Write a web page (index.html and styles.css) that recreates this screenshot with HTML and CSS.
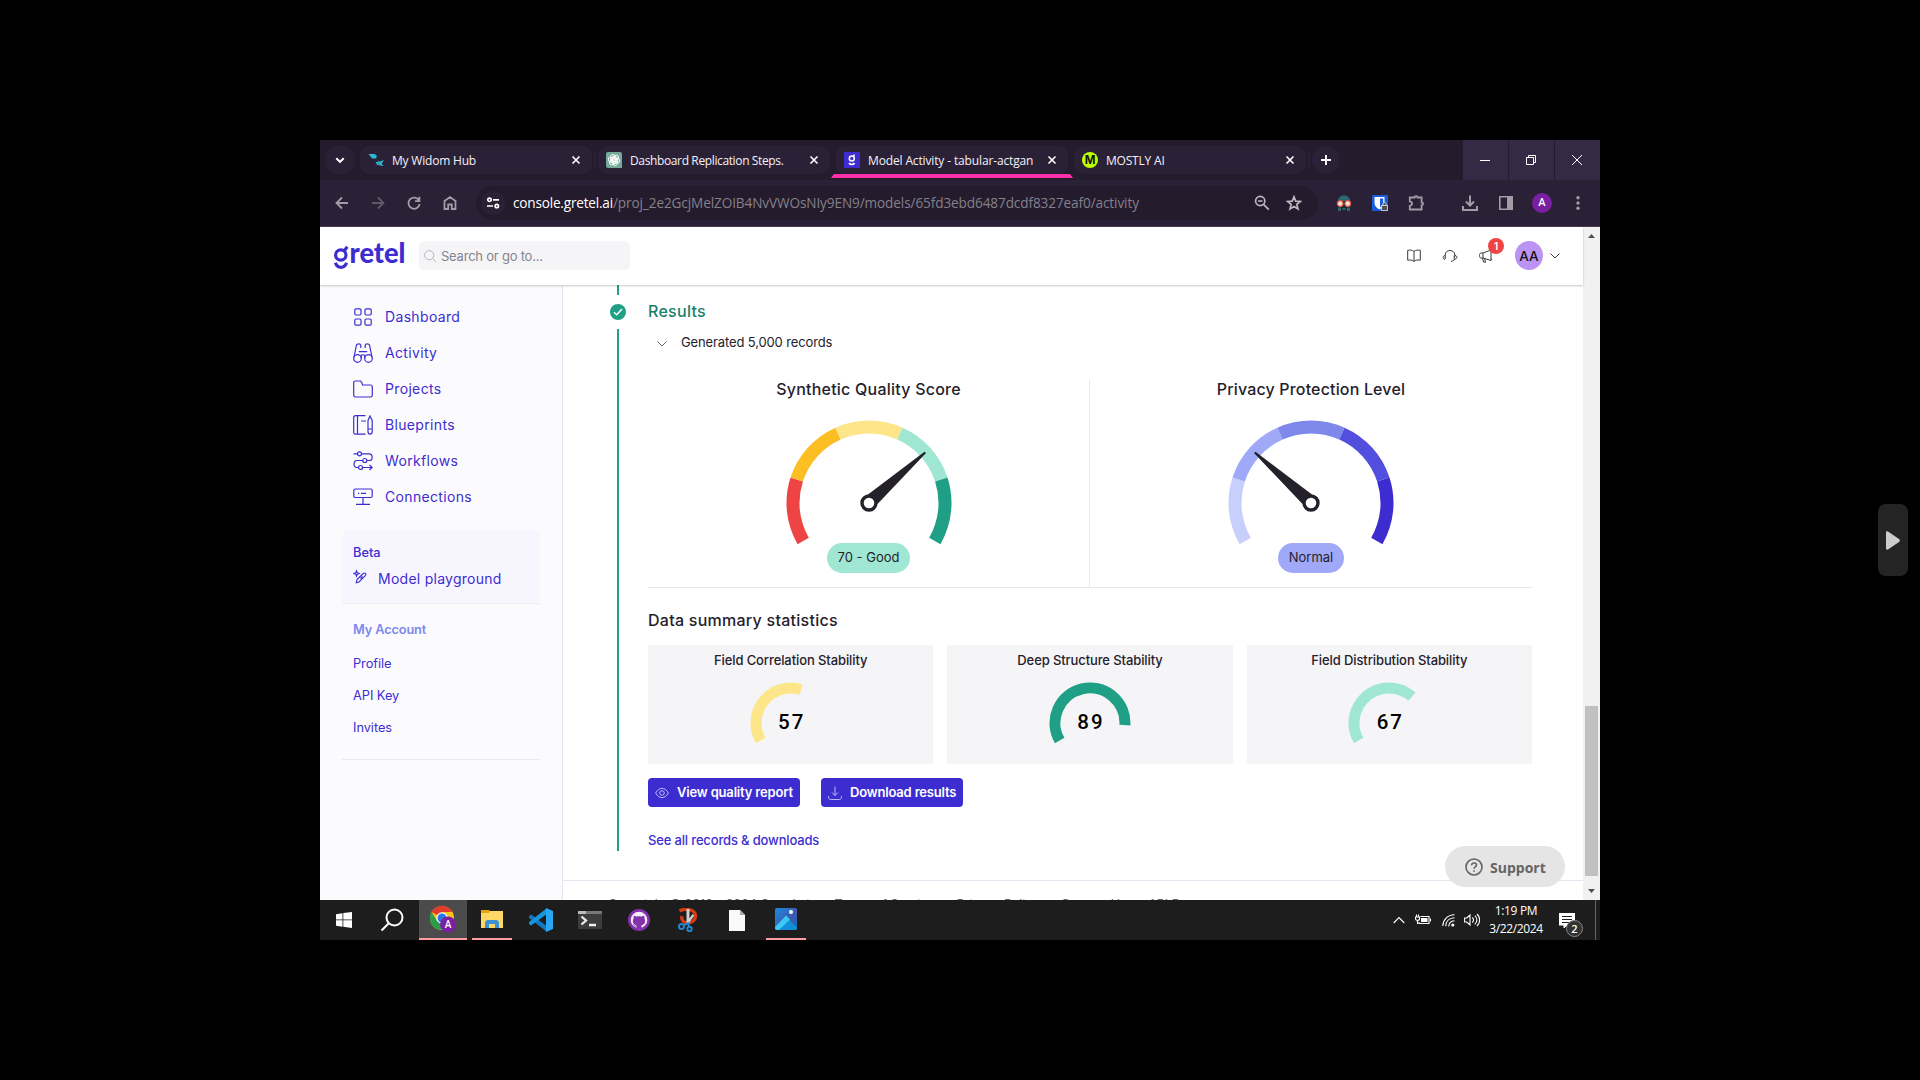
FILE: index.html
```html
<!DOCTYPE html>
<html lang="en">
<head>
<meta charset="utf-8">
<title>Model Activity - tabular-actgan</title>
<link rel="stylesheet" href="styles.css">
</head>
<body>
<div class="window">
  <div class="tabstrip">
    <div class="tab-search"><svg width="28" height="28" viewBox="0 0 28 28" fill="none" stroke="#fff" stroke-width="2"><path d="M10.3 12.2l3.7 3.7 3.7-3.7"/></svg></div>
    <div class="tab">
      <svg class="favicon" viewBox="0 0 16 16"><path fill="#2bbbd0" d="M.5 2h6.500L4.200 6.500zM4 6.500L6.800 2.500 8.500 6.500zM7 2l2 2-1 2zM7.500 10h4l-2 3.500zM9.500 8.500L12 9.500 16 8l-3 4.500zM10 13l2.500-3 3 4z"/></svg>
      <span class="tab-title t1">My Widom Hub</span><svg class="close" viewBox="0 0 10 10"><path d="M1.500 1.500l7 7M8.500 1.500l-7 7"/></svg>
    </div>
    <i class="tab-sep"></i>
    <div class="tab">
      <svg class="favicon" viewBox="0 0 16 16"><path d="M2 0h12a2 2 0 0 1 2 2v14H2a2 2 0 0 1-2-2V2a2 2 0 0 1 2-2z" fill="#74aa9c"/><g fill="none" stroke="#fff" stroke-width=".9"><rect x="4.600" y="2.500" width="4.600" height="8" rx="2.300"/><rect x="4.600" y="2.500" width="4.600" height="8" rx="2.300" transform="rotate(60 8 8)"/><rect x="4.600" y="2.500" width="4.600" height="8" rx="2.300" transform="rotate(120 8 8)"/><rect x="4.600" y="2.500" width="4.600" height="8" rx="2.300" transform="rotate(180 8 8)"/><rect x="4.600" y="2.500" width="4.600" height="8" rx="2.300" transform="rotate(240 8 8)"/><rect x="4.600" y="2.500" width="4.600" height="8" rx="2.300" transform="rotate(300 8 8)"/></g></svg>
      <span class="tab-title t2">Dashboard Replication Steps.</span><svg class="close" viewBox="0 0 10 10"><path d="M1.500 1.500l7 7M8.500 1.500l-7 7"/></svg>
    </div>
    <div class="tab active">
      <svg class="favicon" viewBox="0 0 16 16"><path fill="#3d2dd1" d="M0 0h16v16H0z"/><g fill="none" stroke="#fff" stroke-width="1.500"><circle cx="7.800" cy="6.600" r="2.500"/><path d="M9.500 4.200l1-1.500M5 11c1.200 2 4.400 2 5.600 0"/></g></svg>
      <span class="tab-title t3">Model Activity - tabular-actgan</span><svg class="close" viewBox="0 0 10 10"><path d="M1.500 1.500l7 7M8.500 1.500l-7 7"/></svg>
    </div>
    <div class="tab">
      <svg class="favicon" viewBox="0 0 16 16"><circle cx="8" cy="8" r="8" fill="#c1ff00"/><text class="mostly" x="8" y="12" text-anchor="middle">M</text></svg>
      <span class="tab-title t4">MOSTLY AI</span><svg class="close" viewBox="0 0 10 10"><path d="M1.500 1.500l7 7M8.500 1.500l-7 7"/></svg>
    </div>
    <i class="tab-sep"></i>
    <div class="new-tab"><svg width="28" height="28" viewBox="0 0 28 28" stroke="#fff" stroke-width="2"><path d="M14 9v10M9 14h10"/></svg></div>
    <div class="win-buttons">
      <span><svg width="12" height="12" viewBox="0 0 12 12"><path d="M1 6.500h10"/></svg></span>
      <span><svg width="12" height="12" viewBox="0 0 12 12"><path d="M1.500 3.500h7v7h-7zM3.500 3.500v-2h7v7h-2"/></svg></span>
      <span><svg width="12" height="12" viewBox="0 0 12 12"><path d="M1 1l10 10M11 1L1 11"/></svg></span>
    </div>
  </div>

  <div class="toolbar">
    <div class="nav-buttons">
      <svg viewBox="0 0 16 16"><path d="M14 8H3M8 2.500L2.500 8 8 13.500"/></svg>
      <svg class="dim" viewBox="0 0 16 16"><path d="M2 8h11M8 2.500L13.500 8 8 13.500"/></svg>
      <svg viewBox="0 0 16 16"><path d="M13 5.500A5.600 5.600 0 1 0 13.600 9M13.400 1.800v4.400H9"/></svg>
      <svg viewBox="0 0 16 16"><path d="M2.500 14V6L8 2l5.500 4v8H9.800V9.500H6.200V14z"/></svg>
    </div>
    <div class="urlbar">
      <span class="site-info"><svg width="14" height="14" viewBox="0 0 14 14" fill="none" stroke="#fff" stroke-width="1.600"><circle cx="3.500" cy="3.800" r="1.700"/><path d="M7 3.800h6M1 10h6"/><circle cx="10.800" cy="10" r="1.700"/></svg></span>
      <span class="url"><b>console.gretel.ai</b><span class="path">/proj_2e2GcjMelZOIB4NvVWOsNIy9EN9/models/65fd3ebd6487dcdf8327eaf0/activity</span></span>
      <svg class="zoomicon" width="16" height="16" viewBox="0 0 16 16"><circle cx="6.200" cy="6" r="4.600"/><path d="M9.800 9.600l5 5M4 6h4.500"/></svg>
      <svg class="star" width="16" height="16" viewBox="0 0 16 16"><path d="M8 1.800l1.700 4.300 4.700.3-3.600 3 1.200 4.600L8 11.500 4 14l1.200-4.600-3.600-3 4.700-.3z"/></svg>
    </div>
    <div class="ext">
      <svg viewBox="0 0 16 16"><path fill="#2d6872" d="M2 6C2 2.500 5 .5 8 .5s6 2 6 5.500z"/><path fill="#182933" d="M1.500 7h13v7h-13z"/><path fill="#2d6872" d="M2 12.500h3V16H2zM6.500 13h3v2h-3zM11 12.500h3V16h-3z"/><circle cx="4.200" cy="8.600" r="2.900" fill="#f3dfd6" stroke="#dc5036" stroke-width="1.200"/><circle cx="11.800" cy="8.600" r="2.900" fill="#f3dfd6" stroke="#dc5036" stroke-width="1.200"/></svg>
      <svg viewBox="0 0 16 16"><rect width="16" height="16" rx="1" fill="#175ddc"/><path fill="#fff" d="M2.500 2h10v6c0 3-2 5-5 6.500-3-1.500-5-3.500-5-6.500z"/><path fill="#175ddc" d="M8 3.500h3.200V8c0 1.600-1.200 3-3.200 4.200z"/><path fill="#4d5054" stroke="#dce8dc" stroke-width=".8" d="M9.500 10.500h6v5h-6zM11 10.500V8.500c0-1.300 3-1.300 3 0v2"/></svg>
      <svg viewBox="0 0 16 16"><path fill="none" stroke="#a19ca6" stroke-width="1.800" d="M1.800 2.500h4.800c0-1.800 3-1.800 3 0h4v4.800c2 0 2 2.800 0 2.800v4.400H1.800v-3.600c3-.6 3-4 0-4.600z"/></svg>
    </div>
    <div class="actions">
      <svg viewBox="0 0 16 16" fill="none" stroke="#a19ca6" stroke-width="2"><path d="M8 .5v9.500M4 6.500l4 4 4-4M1 11v4h14v-4"/></svg>
      <svg viewBox="0 0 16 16"><path fill="none" stroke="#a19ca6" stroke-width="1.600" d="M1.800 1.800h12.400v12.400H1.800z"/><path fill="#a19ca6" d="M9 1h6v14H9z"/></svg>
      <span class="profile">A</span>
      <svg viewBox="0 0 16 16" fill="#a19ca6"><circle cx="8" cy="2.700" r="1.700"/><circle cx="8" cy="8" r="1.700"/><circle cx="8" cy="13.300" r="1.700"/></svg>
    </div>
  </div>

  <div class="viewport">
    <div class="page">
      <header class="header">
        <svg class="logo" width="72" height="30" viewBox="0 0 72 30" role="img" aria-label="gretel"><g fill="none" stroke="#3d2dd1" stroke-width="3.200"><circle cx="6.800" cy="14" r="5.200"/><path d="M10.300 9.800l3-4M1.400 21.800c2 6 9 6 11.200 0"/></g><text class="wordmark" x="15.500" y="21.500" textLength="56" lengthAdjust="spacingAndGlyphs">retel</text></svg>
        <div class="search"><svg width="12" height="12" viewBox="0 0 12 12" fill="none" stroke="#b6b4c0"><circle cx="5.200" cy="5.200" r="4.600"/><path d="M8.500 8.500l3.200 3.200"/></svg><span>Search or go to...</span></div>
        <div class="header-tools">
          <svg width="16" height="16" viewBox="0 0 16 16"><path d="M8 3.500v10M8 3.500C6.500 2 4 1.800 1.700 2.300v9.900C4 11.700 6.500 12 8 13.500c1.500-1.500 4-1.800 6.300-1.300V2.300C12 1.800 9.500 2 8 3.500z"/></svg>
          <svg width="16" height="16" viewBox="0 0 16 16"><path d="M3.200 11V7c0-6 9.600-6 9.600 0v2M3 7.500c-2.400.5-2.400 3.500 0 4M13 7.300c2.500.5 2.300 3.200.5 3.700h-1.300V7.500M12.500 11c-.3 2-2 2-3.500 2.300"/></svg>
          <span class="megaphone"><svg width="16" height="16" viewBox="0 0 16 16"><path d="M5 5l8-3v10.500L5 10H3C1 10 1 5 3 5zM5 5v5M4.500 10l1 4 2 .3-.8-3.500M13 4l1-.5M13 11l1 .5"/></svg><b class="badge">1</b></span>
          <span class="avatar">AA</span>
          <svg class="chev" width="10" height="6" viewBox="0 0 10 6"><path d="M.5.500L5 5 9.500.5"/></svg>
        </div>
      </header>
      <div class="body">
        <aside class="sidebar">
          <nav class="menu">
            <a><svg viewBox="0 0 20 20"><rect x="1.800" y="1.800" width="6.200" height="6.200" rx="1.200"/><rect x="12" y="1.800" width="6.200" height="6.200" rx="1.200"/><rect x="1.800" y="12" width="6.200" height="6.200" rx="1.200"/><rect x="12" y="12" width="6.200" height="6.200" rx="1.200"/></svg>Dashboard</a>
            <a><svg viewBox="0 0 20 20"><circle cx="4.500" cy="15.500" r="3.800"/><circle cx="15.500" cy="15.500" r="3.800"/><path d="M.9 14.500L3.500 2c.5-1.500 4-1.500 4.300 0v3M19.100 14.500L16.500 2c-.5-1.500-4-1.500-4.300 0v3M5.800 8.700h8.400M8.200 15.500V12h3.600v3.500"/></svg>Activity</a>
            <a><svg viewBox="0 0 20 20"><path d="M.7 16V3.800C.7 2.500 1.500 2 2.500 2h5l1.500 2 .5 2h7.800c1.200 0 2 .8 2 2v8.300c0 1.200-.8 1.700-1.800 1.700h-15C1.500 18 .7 17.200.7 16z"/></svg>Projects</a>
            <a><svg viewBox="0 0 20 20"><path d="M12.500.7h-10C1.300.7.700 1.500.7 2.500v14.800c0 1.200.8 1.900 1.800 1.900h10M4.500.7v18.500M8 6h5M15 16.500V5.500L17 1l2.200 4.500v11c0 3.500-4.200 3.500-4.200 0zM15 14h4"/></svg>Blueprints</a>
            <a><svg viewBox="0 0 20 20"><circle cx="6.500" cy="2.800" r="2"/><circle cx="11.800" cy="9.500" r="2"/><circle cx="7.500" cy="16.500" r="2"/><path d="M.5 2.800h4M8.500 2.800h7.800c3.800 0 3.800 6.700 0 6.700h-2.500M9.800 9.500H4c-4 0-4 7 0 7h1.500M9.500 16.500H19M16.500 14l2.600 2.500-2.600 2.500"/></svg>Workflows</a>
            <a><svg viewBox="0 0 20 20"><rect x=".8" y="2" width="18.400" height="8.500" rx="1.500"/><path d="M5 6.300h1.200M8 6.300h5M10 10.500V17M3 17.300h14"/></svg>Connections</a>
          </nav>
          <div class="beta"><strong>Beta</strong><a><svg width="14" height="14" viewBox="0 0 14 14"><path d="M3.500.8l.7 2 2 .7-2 .7-.7 2-.7-2-2-.7 2-.7zM4 9.500l6.500-6.200c1.600-1 3 .5 2 2L6 12l-2.700.8zM7.500 8.500l2-2"/></svg>Model playground</a></div>
          <div class="account"><strong>My Account</strong><a>Profile</a><a>API Key</a><a>Invites</a></div>
        </aside>
        <main class="main">
          <div class="content">
            <div class="timeline"><i class="line-top"></i><svg width="16" height="16" viewBox="0 0 16 16"><circle cx="8" cy="8" r="8" fill="#1f9f85"/><path d="M4 8.200l2.700 2.600L12 5" fill="none" stroke="#fff" stroke-width="1.500"/></svg><i class="line-rest"></i></div>
            <section class="results">
              <h2 class="results-title">Results</h2>
              <div class="log"><svg width="10" height="6" viewBox="0 0 10 6" fill="none" stroke="#65636e"><path d="M.5.500L5 5 9.500.5"/></svg><span>Generated 5,000 records</span></div>
              <div class="scores">
                <div class="score">
                  <h3>Synthetic Quality Score</h3>
                  <svg width="170" height="128" viewBox="-85 -85 170 128" fill="none" stroke-width="13">
                    <path stroke="#ef4444" d="M-65.820 38A76 76 0 0 1 -72.280 -23.490"/><path stroke="#fbbf24" d="M-72.280 -23.490A76 76 0 0 1 -30.910 -69.430"/><path stroke="#fde68a" d="M-30.910 -69.430A76 76 0 0 1 30.910 -69.430"/><path stroke="#9fe7d2" d="M30.910 -69.430A76 76 0 0 1 72.280 -23.490"/><path stroke="#1f9f85" d="M72.280 -23.490A76 76 0 0 1 65.820 38"/>
                    <path fill="#25212b" stroke="none" d="M-1 -8.500L55.500 -51.200 57 -50 8.500 1z"/><circle r="7" fill="#fff" stroke="#25212b" stroke-width="3.400"/>
                  </svg>
                  <span class="pill good">70 - Good</span>
                </div>
                <div class="score">
                  <h3 class="privacy">Privacy Protection Level</h3>
                  <svg width="170" height="128" viewBox="-85 -85 170 128" fill="none" stroke-width="13">
                    <path stroke="#c9cffd" d="M-65.820 38A76 76 0 0 1 -72.280 -23.490"/><path stroke="#9fa9f8" d="M-72.280 -23.490A76 76 0 0 1 -30.910 -69.430"/><path stroke="#7e88eb" d="M-30.910 -69.430A76 76 0 0 1 30.910 -69.430"/><path stroke="#524fdf" d="M30.910 -69.430A76 76 0 0 1 72.280 -23.490"/><path stroke="#3d2dd1" d="M72.280 -23.490A76 76 0 0 1 65.820 38"/>
                    <path fill="#25212b" stroke="none" d="M1 -8.500L-55.500 -51.200 -57 -50 -8.500 1z"/><circle r="7" fill="#fff" stroke="#25212b" stroke-width="3.400"/>
                  </svg>
                  <span class="pill normal">Normal</span>
                </div>
              </div>
              <h3 class="summary-title">Data summary statistics</h3>
              <div class="cards">
                <div class="card"><h4>Field Correlation Stability</h4><div class="dial"><svg width="82" height="64" viewBox="-41 -41 82 64" fill="none" stroke="#fde68a" stroke-width="11"><path d="M-30.310 17.500A35 35 0 0 1 10.120 -33.510"/></svg><b>57</b></div></div>
                <div class="card"><h4>Deep Structure Stability</h4><div class="dial"><svg width="82" height="64" viewBox="-41 -41 82 64" fill="none" stroke="#1f9f85" stroke-width="11"><path d="M-30.310 17.500A35 35 0 1 1 34.910 2.200"/></svg><b>89</b></div></div>
                <div class="card"><h4>Field Distribution Stability</h4><div class="dial"><svg width="82" height="64" viewBox="-41 -41 82 64" fill="none" stroke="#9fe7d2" stroke-width="11"><path d="M-30.310 17.500A35 35 0 0 1 22.960 -26.420"/></svg><b>67</b></div></div>
              </div>
              <div class="buttons">
                <a class="btn view"><svg width="14" height="12" viewBox="0 0 14 12"><path d="M.6 6C4-.2 10-.2 13.400 6 10 12.200 4 12.200.6 6z"/><circle cx="7" cy="6" r="2.300"/></svg><span>View quality report</span></a>
                <a class="btn download"><svg width="14" height="14" viewBox="0 0 14 14"><path d="M7 .5v9M4 6.500l3 3 3-3M.6 10v1.500c0 1.300.7 2 2 2h8.800c1.300 0 2-.7 2-2V10"/></svg><span>Download results</span></a>
              </div>
              <a class="see-all">See all records &amp; downloads</a>
            </section>
          </div>
          <footer class="footer">Copyright © 2019 - 2024 Gretel.ai. <span>Terms of Service</span> <span>Privacy Policy</span> <span>Contact Us</span> <span>API Docs</span></footer>
        </main>
      </div>
      <div class="support"><svg width="18" height="18" viewBox="0 0 18 18" fill="none" stroke="#646464" stroke-width="1.600"><circle cx="9" cy="9" r="8"/><path d="M6.600 7.200c.2-3 4.900-2.800 4.900 0 0 1.700-2.500 1.800-2.500 3.500M9 12.200v1.600"/></svg><span>Support</span></div>
    </div>
    <div class="scrollbar"><svg width="7" height="4" viewBox="0 0 7 4"><path fill="#505050" d="M0 4l3.500-4L7 4z"/></svg><i></i><svg width="7" height="4" viewBox="0 0 7 4"><path fill="#505050" d="M0 0l3.500 4L7 0z"/></svg></div>
  </div>

  <div class="taskbar">
    <div class="apps">
      <span><svg width="16" height="16" viewBox="0 0 16 16" fill="#fff"><path d="M0 2.200L6.500 1.200v6.300H0zM7.300 1.100L16 0v7.500H7.300zM0 8.300h6.500v6.400L0 13.800zM7.300 8.300H16V16l-8.700-1.200z"/></svg></span>
      <span><svg width="24" height="24" viewBox="0 0 24 24" fill="none" stroke="#fff" stroke-width="2"><circle cx="14.500" cy="9.500" r="8"/><path d="M8.800 15.200L1.500 22.500"/></svg></span>
      <span class="current"><svg width="26" height="28" viewBox="0 0 26 28"><circle cx="12" cy="13" r="12" fill="#fbc21b"/><path fill="#e33b2e" d="M12 13L1.500 7C6-1.500 18-1.500 22.600 7H12z"/><path fill="#2b9c4a" d="M1.500 7l6 9.500 5.500 2.800L10.500 25C1 24-3 14 1.500 7z"/><circle cx="12" cy="13" r="5.700" fill="#fff"/><circle cx="12" cy="13" r="4.500" fill="#2b75e8"/><circle cx="18" cy="19.500" r="8" fill="#7b1fa2"/><text class="user" x="18" y="23" text-anchor="middle">A</text></svg></span>
      <span class="open"><svg width="22" height="18" viewBox="0 0 22 18"><path fill="#e5a50a" d="M0 0h8l1.500 1.500L8 4H0z"/><path fill="#ffd766" d="M0 3h8l1-2h13v17H0z"/><path fill="#3d92d4" d="M4 18v-6l2-2h10l2 2v6h-4v-4H8v4z"/></svg></span>
      <span><svg width="24" height="24" viewBox="0 0 24 24"><path fill="#1178c0" d="M0 8l2-1.500L18 18v6L0 10z"/><path fill="#1595dc" d="M0 16l2 1.500L18 6V0L0 14z"/><path fill="#2aa7f2" d="M17 0l7 3v18l-7 3z"/></svg></span>
      <span><svg width="24" height="18" viewBox="0 0 24 18"><rect width="24" height="18" rx="1" fill="#3d3d3d"/><path fill="#777" d="M0 0h24v3H0z"/><path fill="#bbb" d="M0 0h8v3H0z"/><path d="M3.500 5.500l4.500 4-4.500 4M11 14h7" stroke="#eee" stroke-width="2.300" fill="none"/></svg></span>
      <span><svg width="22" height="22" viewBox="0 0 22 22"><circle cx="11" cy="11" r="11" fill="#8330ab"/><circle cx="11" cy="11" r="8.300" fill="#f5edfa"/><path fill="#8330ab" d="M8.500 19.500v-3.300c-3.700-.6-4.500-4.700-2.800-7-.2-.9-.2-1.700.2-2.500 1 0 1.800.5 2.500 1 1.700-.5 3.500-.5 5.200 0 .7-.5 1.500-1 2.500-1 .4.800.4 1.600.2 2.500 1.700 2.300.9 6.400-2.800 7v3.300z"/><path d="M8.500 17c-2 .4-2.300-1-3.200-1.600" fill="none" stroke="#8330ab"/></svg></span>
      <span><svg width="20" height="24" viewBox="0 0 20 24"><path fill="none" stroke="#d83b12" stroke-width="3.400" d="M1.500 3C9-.5 18 2 17.500 8.500c-.3 4-4 6.500-8 6.500C6 15 3 12 4 8"/><path fill="#d0d0d0" d="M8.500 1h3v14h-3zM14.500 6l1.800 1.500L11 15l-2-1z"/><g fill="none" stroke="#2586cf" stroke-width="2"><circle cx="3.500" cy="18.500" r="2.500"/><circle cx="11.500" cy="21" r="2.200"/><path d="M6 17.500l4-2.500 1 3.500"/></g></svg></span>
      <span><svg width="16" height="21" viewBox="0 0 16 21"><path fill="#fafafa" d="M0 0h11l5 5v16H0z"/><path fill="#aaa" d="M11 0v5h5z"/></svg></span>
      <span class="open"><svg width="22" height="22" viewBox="0 0 22 22"><defs><linearGradient id="ph" x2="1" y2="1"><stop stop-color="#198cdf"/><stop offset=".6" stop-color="#3e58ad"/><stop offset="1" stop-color="#0874bf"/></linearGradient><clipPath id="pc"><rect width="22" height="22" rx="2"/></clipPath></defs><g clip-path="url(#pc)"><path fill="url(#ph)" d="M0 0h22v22H0z"/><path fill="#138fd8" d="M11 8l13 14H3z"/><path fill="#3bc9f4" d="M0 19L11 7.500l4 4L4 22H0z"/></g><circle cx="16" cy="4" r="2" fill="#fff"/></svg></span>
    </div>
    <div class="tray">
      <svg class="up" width="12" height="8" viewBox="0 0 12 8"><path d="M.7 7L6 1.500 11.300 7"/></svg>
      <svg class="battery" width="16" height="12" viewBox="0 0 16 12"><path d="M5.500 2.500h8.500v7H4v-1.500M15.500 4.500v3M.5 3h4v2c-.5 2-3.500 2-4 0zM1.500 3V.5M3.500 3V.5M2.500 6.500v3.500"/><path fill="#fff" stroke="none" d="M6 4h6.500v4H6z"/></svg>
      <svg class="wifi" width="13" height="13" viewBox="0 0 13 13"><path d="M.8 12C1 5.500 5.500 1 12.500.8M3.800 12.300c0-5 3.500-8.300 8.700-8.500M6.800 12.500c0-3.500 2-5.500 5.700-5.700"/><circle cx="10.800" cy="11" r="1.600" fill="#fff" stroke="none"/></svg>
      <svg class="volume" width="16" height="14" viewBox="0 0 16 14"><path d="M.6 5h2.200L6 2v10L2.800 9H.6zM8.300 4.500c1.600 1.500 1.600 3.500 0 5M10.800 2.700c2.800 2.600 2.800 6 0 8.600M13 1c3.500 3.500 3.500 8.500 0 12"/></svg>
      <div class="clock"><span>1:19 PM</span><span>3/22/2024</span></div>
      <div class="notice"><svg width="16" height="15" viewBox="0 0 16 15"><path fill="#fff" d="M0 0h16v12H8l-3 3v-3H0z"/><path stroke="#1d1d1d" d="M3 3.500h10M3 6.500h10M3 9.500h7"/></svg><b>2</b></div>
      <i class="peek"></i>
    </div>
  </div>
</div>
<div class="next"><svg width="14" height="19" viewBox="0 0 14 19"><path fill="#ccc" d="M0 1.500C0 .5 1 0 2 .5l11 7.500c1.200.8 1.200 2.200 0 3L2 18.500C1 19 0 18.500 0 17.500z"/></svg></div>
</body>
</html>
```

FILE: styles.css
```css
* { box-sizing: border-box; }
body { margin: 0; width: 1920px; height: 1080px; background: #000; overflow: hidden; display: flex; align-items: center; font-family: Inter, "Liberation Sans", sans-serif; }
svg { display: block; flex: none; }
h2, h3, h4 { margin: 0; font-weight: 500; }
.window { width: 1280px; height: 800px; margin-left: 320px; display: flex; flex-direction: column; flex: none; overflow: hidden; }

/* Browser chrome */
.tabstrip { height: 40px; flex: none; background: #241b2d; padding: 6px 0 0 6px; display: flex; align-items: flex-start; font-family: "Open Sans", "Noto Sans", sans-serif; }
.tab-search, .new-tab { width: 28px; height: 28px; border-radius: 10px; background: #2b2136; margin-right: 6px; }
.new-tab { border-radius: 50%; margin: 0; }
.tab { width: 232px; height: 28px; margin-right: 6px; padding: 0 11px 0 8px; background: #2b2136; border-radius: 9px; display: flex; align-items: center; color: #f4f1f6; }
.tab-sep { flex: none; width: 2px; height: 16px; margin: 6px 2px 0 -4px; background: #2b2136; }
.tab.active { position: relative; }
.tab.active::after { content: ""; position: absolute; left: -5px; right: -5px; top: 28px; height: 4px; background: #ff2fab; clip-path: polygon(3px 0, calc(100% - 3px) 0, 100% 100%, 0 100%); }
.favicon { width: 16px; height: 16px; margin-right: 8px; }
.mostly { font: 700 11.500px Inter, sans-serif; fill: #10130a; }
.tab-title { flex: 1; font-size: 12px; line-height: 16px; white-space: nowrap; padding-top: 1px; }
.t1 { letter-spacing: -.2px; }
.t2 { letter-spacing: -.37px; }
.t3 { letter-spacing: -.14px; }
.t4 { letter-spacing: -.2px; }
.close { width: 10px; height: 10px; fill: none; stroke: #fff; stroke-width: 1.600; }
.win-buttons { display: flex; gap: 1px; height: 40px; margin: -6px 0 0 auto; }
.win-buttons span { width: 45px; background: #352945; display: flex; align-items: center; justify-content: center; padding-right: 1px; }
.win-buttons svg { fill: none; stroke: #fff; stroke-width: 1; }

.toolbar { height: 47px; flex: none; background: #2b2136; border-bottom: 1px solid #453b50; display: flex; align-items: center; padding-left: 14px; }
.nav-buttons { display: flex; gap: 20px; width: 142px; }
.nav-buttons svg { width: 16px; height: 16px; fill: none; stroke: #a19ca6; stroke-width: 1.800; }
.nav-buttons .dim { stroke: #62596b; }
.urlbar { width: 842px; height: 34px; border-radius: 17px; background: #241b2d; display: flex; align-items: center; padding: 0 16px 0 5px; font-family: "Open Sans", "Noto Sans", sans-serif; }
.site-info { width: 24px; height: 24px; border-radius: 50%; background: #2b2136; display: flex; align-items: center; justify-content: center; margin-right: 8px; }
.url { flex: 1; font-size: 13.600px; letter-spacing: -.11px; line-height: 18px; padding-bottom: 1px; color: #85808b; white-space: nowrap; }
.url b { color: #fff; font-weight: 400; letter-spacing: -.2px; }
.urlbar svg { fill: none; stroke: #bcb8bf; stroke-width: 1.700; }
.urlbar .site-info svg { stroke: #fff; }
.zoomicon { margin-right: 16px; }
.ext { display: flex; gap: 20px; margin-left: 18px; }
.ext svg { width: 16px; height: 16px; }
.actions { display: flex; align-items: center; gap: 20px; margin-left: 38px; }
.actions svg { width: 16px; height: 16px; }
.profile { width: 20px; height: 20px; border-radius: 50%; background: #7b1fa2; color: #fff; font: 500 11px/20px Roboto, sans-serif; text-align: center; margin: 0 -2px; }

/* Web page */
.viewport { height: 673px; flex: none; display: flex; background: #fff; overflow: hidden; }
.page { width: 1263px; display: flex; flex-direction: column; position: relative; }
.header { height: 58px; flex: none; background: #fff; box-shadow: 0 1px 2px rgba(0, 0, 0, .22); z-index: 1; display: flex; align-items: flex-start; padding: 14px 23px 0 14px; }
.logo { width: 72px; margin-right: 13px; overflow: visible; }
.wordmark { font: 900 27.500px Lato, sans-serif; fill: #3d2dd1; }
.search { width: 211px; height: 29px; border-radius: 5px; background: #f5f5f8; display: flex; align-items: center; padding-left: 5px; gap: 5px; color: #85838f; font-size: 13px; letter-spacing: -.22px; }
.header-tools { margin-left: auto; display: flex; align-items: center; height: 29px; }
.header-tools svg { fill: none; stroke: #3a3840; stroke-width: 1; margin-right: 20px; }
.megaphone { position: relative; }
.badge { position: absolute; left: 10px; top: -10px; width: 16px; height: 16px; border-radius: 50%; background: #ef4444; color: #fff; font-size: 10px; line-height: 16px; text-align: center; font-weight: 600; }
.avatar { width: 28px; height: 29px; margin-left: 1px; margin-right: 7px; border-radius: 50%; background: #bb93f3; color: #111; font-size: 13.500px; font-weight: 500; line-height: 30px; text-align: center; }
.header-tools .chev { margin: 0; }
.body { display: flex; height: 615px; flex: none; }
.sidebar { width: 243px; background: #fbfbfe; border-right: 1px solid #e6e5ef; padding: 14px 22px 0; flex: none; color: #3d2dd1; }
.menu { padding-left: 11px; height: 230px; }
.menu a { height: 36px; display: flex; align-items: center; gap: 12px; font-size: 14px; line-height: 17px; padding-bottom: 1px; letter-spacing: .34px; }
.menu svg { margin-top: 1px; }
.menu svg, .beta svg { width: 20px; height: 20px; fill: none; stroke: #3d2dd1; stroke-width: 1.200; }
.beta { width: 198px; height: 75px; border-radius: 9px 9px 0 0; background: linear-gradient(#f7f5fe, #f7f5fe) 0 0 / 100% 73px no-repeat; border-bottom: 1px solid #eae9f0; padding: 16px 11px 0; font-size: 12.800px; }
.beta strong { display: block; font-weight: 500; line-height: 16px; }
.beta a { display: flex; align-items: center; gap: 11px; font-size: 14px; letter-spacing: .26px; line-height: 20px; margin-top: 8px; white-space: nowrap; }
.beta svg { width: 14px; height: 14px; margin-top: -5px; stroke-width: 1.100; }
.account { width: 198px; height: 156px; padding: 18px 11px 0; border-bottom: 1px solid #eae9f0; font-size: 12.800px; }
.account strong { display: block; color: #7e88eb; font-weight: 600; line-height: 16px; margin-bottom: 10px; letter-spacing: -.15px; }
.account a { display: block; height: 32px; line-height: 32px; letter-spacing: -.05px; }
.main { width: 1020px; }
.content { display: flex; height: 595px; padding-left: 47px; }
.timeline { width: 16px; margin-right: 22px; display: flex; flex-direction: column; align-items: center; }
.timeline i { width: 2px; background: #1f9f85; }
.line-top { height: 10px; margin-bottom: 9px; }
.line-rest { height: 522px; margin-top: 9px; }
.results { width: 884px; color: #25212b; }
.results-title { font-size: 16px; line-height: 20px; color: #1a806b; margin-top: 16px; letter-spacing: .28px; }
.log { display: flex; align-items: center; gap: 14px; margin: 12px 0 0 9px; font-size: 13px; letter-spacing: -.13px; line-height: 18px; }
.log svg { margin-top: 4px; }
.scores { display: flex; margin-top: 29px; height: 208px; border-bottom: 1px solid #e8e7ea; }
.score { width: 442px; display: flex; flex-direction: column; align-items: center; height: 207px; }
.score:first-child { border-right: 1px solid #e8e7ea; }
.score h3 { font-size: 16px; line-height: 18px; letter-spacing: .22px; }
.score .privacy { letter-spacing: .16px; }
.score svg { margin-top: 20px; height: 128px; }
.pill { height: 30px; line-height: 29px; margin-top: -3px; border-radius: 15px; font-size: 13px; padding: 0 11px; }
.good { background: #9fe7d2; }
.normal { background: #9fa9f8; }
.summary-title { font-size: 16px; line-height: 20px; margin-top: 22px; letter-spacing: .26px; }
.cards { display: grid; grid-template-columns: 1fr 1fr 1fr; gap: 14px; margin-top: 15px; height: 119px; }
.card { background: #f5f5f8; display: flex; flex-direction: column; align-items: center; }
.card h4 { font-size: 13px; line-height: 16px; margin-top: 7px; letter-spacing: -.1px; }
.dial { position: relative; margin-top: 14px; color: #000; width: 82px; }
.dial b { position: absolute; left: 2px; right: 0; top: 28px; font: 500 20.500px/24px Roboto, sans-serif; letter-spacing: 2px; text-align: center; }
.buttons { display: flex; gap: 21px; margin-top: 14px; }
.btn { height: 29px; border-radius: 4px; background: #3d2dd1; color: #fff; display: flex; align-items: center; padding: 0 7px; gap: 8px; font-size: 13px; letter-spacing: -.18px; line-height: 16px; font-weight: 600; white-space: nowrap; }
.btn span { margin-top: -1px; }
.view { width: 152px; }
.download { width: 142px; }
.btn svg { fill: none; stroke: #cdc8f8; stroke-width: .9; }
.see-all { display: block; font-size: 13px; line-height: 18px; margin-top: 24px; letter-spacing: -.16px; color: #3d2dd1; font-weight: 500; }
.footer { height: 20px; border-top: 1px solid #e6e5ef; padding: 16px 0 0 45px; font-size: 12.500px; line-height: 16px; color: #65636e; overflow: hidden; white-space: nowrap; }
.footer span { margin-left: 18px; }
.support { position: absolute; left: 1125px; top: 619px; width: 120px; height: 41px; border-radius: 20.500px; background: #e5e5e5; color: #646464; display: flex; align-items: center; padding: 1px 0 0 20px; gap: 7px; font: 700 14px "Open Sans", sans-serif; z-index: 2; }
.scrollbar { width: 17px; background: #f1f1f1; display: flex; flex-direction: column; align-items: center; padding: 7px 0; }
.scrollbar i { width: 13px; height: 170px; background: #c1c1c1; margin: 468px 0 13px; }

/* Windows taskbar */
.taskbar { height: 40px; flex: none; background: #1d1d1d; display: flex; justify-content: space-between; color: #fff; }
.apps { display: flex; }
.apps span { width: 40px; margin-right: 9px; height: 40px; display: flex; align-items: center; justify-content: center; }
.apps span:first-child { margin-left: 4px; margin-right: 8px; }
.apps span:nth-child(2) { margin-right: 7px; }
.apps .current { width: 48px; margin-right: 5px; background: #4b4b4b; border-bottom: 2px solid #ff9c9e; }
.apps .open { border-bottom: 2px solid #ff9c9e; }
.user { font: 500 10px Roboto, sans-serif; fill: #fff; }
.tray { display: flex; align-items: center; }
.tray svg { fill: none; stroke: #fff; stroke-width: 1.100; }
.up { margin-right: 10px; }
.battery { margin-right: 11px; }
.wifi { margin-right: 9px; }
.volume { margin-right: 8px; }
.clock { width: 56px; font: 12px/18px "Open Sans", "Noto Sans", sans-serif; text-align: center; letter-spacing: -.35px; white-space: nowrap; margin-right: 15px; }
.clock span { display: block; }
.notice { position: relative; width: 28px; margin-right: 8px; }
.tray .notice svg { stroke-width: 1; }
.notice b { position: absolute; left: 7px; top: 7px; width: 17px; height: 17px; border-radius: 50%; background: #323232; border: 1px solid #888; font: 600 11px/15px "Open Sans", sans-serif; text-align: center; }
.peek { width: 1px; height: 40px; background: #666; margin-right: 4px; }

.next { width: 30px; height: 72px; margin-left: 278px; border-radius: 8px; background: #242424; display: flex; align-items: center; justify-content: center; flex: none; }
```
